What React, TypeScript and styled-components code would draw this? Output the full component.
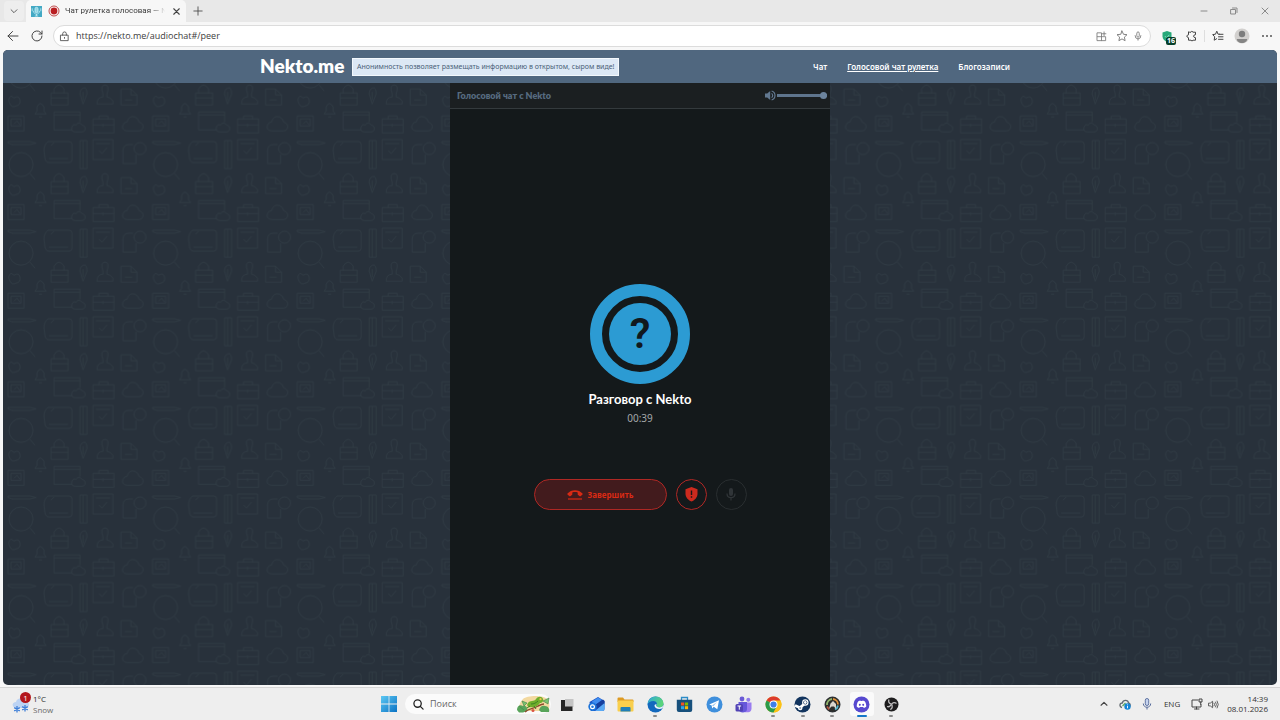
import React from "react";
import styled, { createGlobalStyle, css } from "styled-components";

const UI_FONT = `"Open Sans", "Noto Sans", sans-serif`;
const SITE_FONT = `"Noto Sans", "Open Sans", sans-serif`;
const HEADING_FONT = `Lato, "Noto Sans", sans-serif`;

const GlobalStyle = createGlobalStyle`
  *, *::before, *::after { box-sizing: border-box; }
  body { margin: 0; background: #f7f7f7; font-family: ${UI_FONT}; }
  button, input { font: inherit; color: inherit; }
  button { padding: 0; border: 0; background: none; cursor: pointer; }
  h1, p { margin: 0; }
  svg { display: block; flex: none; }
`;

const Desktop = styled.div`
  display: flex;
  flex-direction: column;
  min-height: 100vh;
`;

/* ---------- Browser chrome ---------- */

const TabStrip = styled.div`
  display: flex;
  align-items: center;
  height: 22px;
  padding-left: 4px;
  background: #e8e8e8;
`;

const IconButton = styled.button<{ $w?: number; $soft?: boolean }>`
  display: flex;
  flex: none;
  align-items: center;
  justify-content: center;
  width: ${(p) => p.$w ?? 22}px;
  height: 22px;
  color: ${(p) => (p.$soft ? "#767676" : "#444")};
`;

const TabMenuButton = styled(IconButton)`
  height: 20px;
  margin-right: 2px;
  border-radius: 4px;
  background: #eeeeee;
`;

const Tab = styled.div`
  display: flex;
  align-items: center;
  gap: 5px;
  height: 22px;
  width: 160px;
  padding: 0 4px;
  border-radius: 5px 5px 0 0;
  background: #f7f7f7;
`;

const TabTitle = styled.span`
  flex: 1;
  min-width: 0;
  white-space: nowrap;
  font-family: Roboto, sans-serif;
  font-size: 8px;
  line-height: 12px;
  color: #3a3a3a;
  mask-image: linear-gradient(to right, #000 88%, transparent);
`;

const WindowControls = styled.div`
  display: flex;
  margin-left: auto;

  ${IconButton} {
    color: #8a8a8a;
  }
`;

const Toolbar = styled.div`
  display: flex;
  align-items: center;
  height: 28px;
  padding-left: 2px;
  background: #f7f7f7;
`;

const AddressBar = styled.label`
  display: flex;
  flex: 1;
  align-items: center;
  height: 22px;
  margin: 0 4px;
  padding: 0 4px 0 5px;
  border: 1px solid #dcdcdc;
  border-radius: 11px;
  background: #fff;
  color: #555;
`;

const AddressInput = styled.input`
  flex: 1;
  min-width: 0;
  margin-left: 6px;
  padding: 0;
  border: 0;
  outline: 0;
  background: transparent;
  font-size: 9px;
  line-height: 14px;
  color: #3c3c3c;
`;

const ToolbarDivider = styled.span`
  width: 1px;
  height: 12px;
  background: #dedede;
`;

const BadgeHost = styled(IconButton)`
  position: relative;
`;

const Badge = styled.span`
  position: absolute;
  left: 11px;
  top: 12px;
  padding: 0 1px;
  border-radius: 2px;
  background: #063f2b;
  color: #fff;
  font-size: 7px;
  font-weight: 700;
  line-height: 8px;
`;

/* ---------- Site ---------- */

const Page = styled.div`
  display: flex;
  flex: 1;
  flex-direction: column;
  margin: 0 3px 2px;
  overflow: hidden;
  border-radius: 5px;
  background: #28313b;
  font-family: ${SITE_FONT};
`;

const SiteHeader = styled.header`
  background: #50677f;
`;

const HeaderInner = styled.div`
  display: flex;
  align-items: center;
  max-width: 760px;
  height: 33px;
  margin: 0 auto;
`;

const Logo = styled.a`
  width: 92px;
  padding-bottom: 2px;
  color: #fff;
  font-family: ${HEADING_FONT};
  font-size: 19px;
  font-weight: 800;
  line-height: 24px;
  text-decoration: none;
`;

const Notice = styled.p`
  padding: 0 4px;
  border: 1px solid #f3f8fc;
  background: #dce8f5;
  color: #4a6178;
  font-size: 7px;
  line-height: 16px;
  white-space: nowrap;
`;

const Nav = styled.nav`
  display: flex;
  margin-left: auto;
`;

const NavLink = styled.a<{ $active?: boolean }>`
  padding: 0 10px;
  color: #fff;
  font-size: 8px;
  font-weight: 600;
  line-height: 16px;
  text-decoration: ${(p) => (p.$active ? "underline" : "none")};
`;

const SiteBody = styled.div`
  position: relative;
  display: flex;
  flex: 1;
  justify-content: center;
`;

const Backdrop = styled.svg`
  position: absolute;
  inset: 0;
  width: 100%;
  height: 100%;
`;

const CallPanel = styled.main`
  position: relative;
  display: flex;
  flex-direction: column;
  width: 380px;
  max-width: 100%;
  background: #14191b;
`;

const PanelHeader = styled.div`
  display: flex;
  align-items: center;
  justify-content: space-between;
  height: 26px;
  padding: 0 3px 0 7px;
  border-bottom: 1px solid #343a3d;
  background: #1b1f21;
  color: #566a7f;
  font-family: ${HEADING_FONT};
  font-size: 9px;
  font-weight: 800;
`;

const Volume = styled.label`
  display: flex;
  align-items: center;
  gap: 1px;
  color: #627890;
`;

const VolumeSlider = styled.input`
  width: 50px;
  height: 8px;
  margin: 0;
  appearance: none;
  background: linear-gradient(#5f758d, #5f758d) center / 100% 3px no-repeat;

  &::-webkit-slider-thumb {
    appearance: none;
    width: 7px;
    height: 7px;
    border-radius: 50%;
    background: #6d849d;
  }
`;

const CallBody = styled.section`
  display: flex;
  flex: 1;
  flex-direction: column;
  align-items: center;
  justify-content: center;
`;

const AvatarRing = styled.div`
  display: flex;
  align-items: center;
  justify-content: center;
  width: 100px;
  height: 100px;
  border: 12px solid #2c9bd3;
  border-radius: 50%;
`;

const AvatarCore = styled.div`
  display: flex;
  align-items: center;
  justify-content: center;
  width: 62px;
  height: 62px;
  border-radius: 50%;
  background: #2c9bd3;
  color: #11191e;
  font-family: Roboto, sans-serif;
  font-size: 42px;
  font-weight: 600;
  line-height: 62px;
`;

const CallTitle = styled.h1`
  margin-top: 6px;
  color: #fff;
  font-family: ${HEADING_FONT};
  font-size: 13px;
  font-weight: 700;
  line-height: 18px;
`;

const CallTimer = styled.p`
  margin-top: 2px;
  color: #a3a7a9;
  font-size: 10px;
  line-height: 16px;
`;

const Controls = styled.div`
  display: flex;
  gap: 9px;
  margin-top: 53px;
`;

const outlined = css`
  display: flex;
  align-items: center;
  justify-content: center;
  height: 31px;
  border-radius: 16px;
`;

const EndButton = styled.button`
  ${outlined}
  gap: 5px;
  width: 133px;
  border: 1px solid #ae2824;
  background: #421b1d;
  color: #d82a14;
  font-size: 8px;
  font-weight: 700;
`;

const RoundButton = styled.button<{ $muted?: boolean }>`
  ${outlined}
  width: 31px;
  border: 1px solid ${(p) => (p.$muted ? "#292e30" : "#b02825")};
  color: ${(p) => (p.$muted ? "#303538" : "#cc2a1e")};
`;

/* ---------- Taskbar ---------- */

const Taskbar = styled.footer`
  display: grid;
  grid-template-columns: 1fr auto 1fr;
  align-items: center;
  height: 33px;
  border-top: 1px solid #d6d6d6;
  background: #eeeeee;
`;

const Weather = styled.button`
  position: relative;
  display: flex;
  align-items: center;
  gap: 3px;
  justify-self: start;
  padding-left: 12px;
  font-size: 8px;
  line-height: 11px;
  text-align: left;
  color: #2b2b2b;
`;

const WeatherBadge = styled.span`
  position: absolute;
  left: 20px;
  top: -1px;
  width: 11px;
  height: 11px;
  border-radius: 50%;
  background: #b3161c;
  color: #fff;
  font-size: 8px;
  line-height: 11px;
  text-align: center;
`;

const Line = styled.span<{ $soft?: boolean }>`
  display: block;
  color: ${(p) => (p.$soft ? "#6a6a6a" : "inherit")};
`;

const Launcher = styled.div`
  display: flex;
  align-items: center;
  gap: 1px;
`;

const SearchBox = styled.label`
  display: flex;
  align-items: center;
  width: 146px;
  height: 20px;
  padding: 0 1px 0 8px;
  border-radius: 10px;
  background: #fbfbfb;
  color: #222;
`;

const SearchInput = styled.input`
  flex: 1;
  min-width: 0;
  margin-left: 6px;
  padding: 0;
  border: 0;
  outline: 0;
  background: transparent;
  font-size: 9px;
  line-height: 14px;

  &::placeholder {
    color: #666;
  }
`;

const Apps = styled.div`
  display: grid;
  grid-template-columns: repeat(12, 1fr);
  width: 354px;
`;

const AppButton = styled.button<{ $state?: "running" | "active" }>`
  position: relative;
  display: flex;
  align-items: center;
  justify-content: center;
  height: 24px;
  margin: 0 3px;
  border-radius: 3px;
  background: ${(p) => (p.$state === "active" ? "#fafafa" : "transparent")};

  &::after {
    content: "";
    position: absolute;
    bottom: -1px;
    display: ${(p) => (p.$state ? "block" : "none")};
    width: ${(p) => (p.$state === "active" ? 10 : 4)}px;
    height: 2px;
    border-radius: 1px;
    background: ${(p) => (p.$state === "active" ? "#1677c8" : "#8a8a8a")};
  }
`;

const Tray = styled.div`
  display: flex;
  align-items: center;
  justify-self: end;
  padding-right: 12px;
  color: #333;
`;

const Language = styled.button`
  margin: 0 9px 0 6px;
  font-size: 8px;
  line-height: 12px;
`;

const Clock = styled.time`
  margin-left: 6px;
  font-size: 8px;
  line-height: 10px;
  text-align: right;
`;

/* ---------- Icons ---------- */

type StrokeProps = { d: string; size?: number; box?: number; sw?: number };

const Stroke = ({ d, size = 12, box = 12, sw = 1 }: StrokeProps) => (
  <svg width={size} height={size} viewBox={`0 0 ${box} ${box}`} fill="none" stroke="currentColor" strokeWidth={sw} strokeLinecap="round" strokeLinejoin="round" aria-hidden="true">
    <path d={d} />
  </svg>
);

const Favicon = () => (
  <svg width="11" height="11" viewBox="0 0 11 11" aria-hidden="true">
    <rect width="11" height="11" fill="#43a9c4" />
    <g fill="none" stroke="#c7eef5" strokeWidth=".8">
      <rect x="4" y="1.3" width="3" height="5.4" rx="1.5" fill="#8fd5e4" />
      <path d="M2.5 4.8c0 4.4 6 4.4 6 0M5.5 8v2M3.8 10h3.4M1.2 2.3v3M9.8 2.3v3" />
    </g>
  </svg>
);

const RecordDot = () => (
  <svg width="12" height="12" viewBox="0 0 12 12" aria-hidden="true">
    <circle cx="6" cy="6" r="5" fill="#fff" stroke="#bd4a4a" />
    <circle cx="6" cy="6" r="3.4" fill="#b91f22" />
  </svg>
);

const AvatarIcon = () => (
  <svg width="16" height="16" viewBox="0 0 16 16" aria-hidden="true">
    <circle cx="8" cy="8" r="7.5" fill="#d2d0ce" />
    <circle cx="8" cy="6" r="3.2" fill="#7d7d7d" />
    <path d="M2.8 11h10.400c0 2-2.200 4-5.200 4s-5.200-2-5.200-4z" fill="#858585" />
  </svg>
);

const ShieldCheck = () => (
  <svg width="10" height="11" viewBox="0 0 10 11" aria-hidden="true">
    <path d="M5 0l4.500 1.600v4c0 2.600-2 4.400-4.500 5.400C2.500 10 .5 8.200.5 5.600v-4z" fill="#27a97a" />
    <path d="M3 5.200l1.600 1.600 2.800-3" fill="none" stroke="#8fe0c0" />
  </svg>
);

const Speaker = () => (
  <svg width="11" height="11" viewBox="0 0 11 11" aria-hidden="true">
    <path d="M0 3.600h2.200L5.200 1v9L2.200 7.400H0z" fill="currentColor" />
    <path d="M6.600 3.400c1.400 1.100 1.400 3.100 0 4.200M6.600 1c4.500 1.400 4.500 7.600 0 9" fill="none" stroke="currentColor" strokeWidth="1.200" />
  </svg>
);

const HangUp = () => (
  <svg width="16" height="12" viewBox="0 0 16 12" aria-hidden="true">
    <path d="M8 1.200c-3 0-5.600 1.200-7.500 3.400-.3.300-.3.600 0 .9l1.900 1.700c.3.200.6.200.9 0l1.600-1.200c.3-.2.400-.4.400-.7V3.500c1.800-.6 3.600-.6 5.400 0v1.800c0 .3.100.5.400.7l1.600 1.200c.3.200.6.200.9 0l1.900-1.700c.3-.3.300-.6 0-.9C13.600 2.400 11 1.200 8 1.200z" fill="currentColor" />
    <path d="M1 10h14" stroke="currentColor" strokeWidth="1.200" />
  </svg>
);

const ReportShield = () => (
  <svg width="13" height="15" viewBox="0 0 13 15" aria-hidden="true">
    <path d="M6.500 0L12.500 2.300v4.400c0 3.500-2.500 6.300-6 7.800C3 13 .5 10.200.5 6.700V2.300z" fill="currentColor" />
    <path d="M6.500 3.600v4.300M6.500 9.300v1.500" stroke="#1b1718" strokeWidth="1.400" />
  </svg>
);

const MicSolid = () => (
  <svg width="10" height="13" viewBox="0 0 10 13" aria-hidden="true">
    <rect x="3" y="0" width="4" height="8" rx="2" fill="currentColor" />
    <path d="M1 5.500c0 5.500 8 5.500 8 0M5 9.600V12.500" fill="none" stroke="currentColor" strokeWidth="1.200" />
  </svg>
);

const WindowsLogo = () => (
  <svg width="16" height="16" viewBox="0 0 16 16" aria-hidden="true">
    <defs>
      <linearGradient id="win" x1="0" y1="0" x2="1" y2="1">
        <stop offset="0" stopColor="#5cc8f3" />
        <stop offset="1" stopColor="#0a72c4" />
      </linearGradient>
    </defs>
    <path d="M0 0h7.600v7.600H0zM8.400 0H16v7.600H8.400zM0 8.400h7.600V16H0zM8.400 8.400H16V16H8.400z" fill="url(#win)" />
  </svg>
);

const Chameleon = () => (
  <svg width="33" height="18" viewBox="0 0 33 18" aria-hidden="true">
    <path d="M6 4C10 0 27 0 30 4c3 3 3 9 1 12H3C1 12 3 7 6 4z" fill="#f3d9a0" />
    <path d="M0 15c0-4 3-6 6-4 3-1 5 2 4 5l-4 1.500H2zM22 15c1-4 4-5 6-4 3 0 5 3 4 6H24z" fill="#58a45a" />
    <path d="M5 6l5 2-3 3zM26 6l6-3-1 6zM2 11l5 4" fill="#7cc36f" stroke="#3f8248" strokeWidth=".6" />
    <path d="M8 17c4-4 9-3 13-6 2-1 4-2 6-2" fill="none" stroke="#8d4b2d" strokeWidth="1.400" />
    <path d="M11 8c2-3 6-1 8-4 2-3 6-3 7 0 1 2-1 4-3 4-2 3-6 5-9 4-3 1-5-2-3-4z" fill="#6fae2c" />
    <path d="M14 9c3 0 5-1 7-3M17 11l2 3M13 11l-3 2" fill="none" stroke="#3f7f23" strokeWidth="1" />
    <circle cx="23.500" cy="4.200" r="1.100" fill="#f2c14e" />
    <circle cx="16" cy="15.500" r="1.500" fill="#d95445" />
  </svg>
);

const TaskView = () => (
  <svg width="16" height="16" viewBox="0 0 16 16" aria-hidden="true">
    <path d="M6 3h8.500v8H6z" fill="#c4c4c4" />
    <path d="M2 4h4v6.500h7.500V15H2z" fill="#262626" />
  </svg>
);

const OutlookIcon = () => (
  <svg width="17" height="16" viewBox="0 0 17 16" aria-hidden="true">
    <path d="M1.500 6L10 1l6.500 4v8q0 2-2 2H3z" fill="#1a52c4" />
    <path d="M4 5.500l6-4 4 2.500-8 6z" fill="#3f8df0" />
    <path d="M7 9l8-5.500 1.500 1.500v3L9 13z" fill="#163f9e" />
    <path d="M16.500 7v6q0 2-2 2H7z" fill="#5aaaf5" />
    <circle cx="4.500" cy="10.800" r="4.200" fill="#1c74da" />
    <circle cx="4.500" cy="10.800" r="1.900" fill="none" stroke="#fff" strokeWidth="1.200" />
  </svg>
);

const FolderIcon = () => (
  <svg width="17" height="15" viewBox="0 0 17 15" aria-hidden="true">
    <path d="M.5 1.500Q.5.500 1.500.500H6l1.500 2h8q1 0 1 1V5H.5z" fill="#dd9a22" />
    <rect x=".5" y="3.500" width="16" height="11" rx="1" fill="#f9cf4d" />
    <path d="M3.500 14.500V11q0-1 1-1h8q1 0 1 1v3.500z" fill="#1f7fb8" />
  </svg>
);

const EdgeIcon = () => (
  <svg width="17" height="17" viewBox="0 0 17 17" aria-hidden="true">
    <defs>
      <linearGradient id="edge" x1="0" y1="0" x2="1" y2=".3">
        <stop offset="0" stopColor="#2aa8dc" />
        <stop offset="1" stopColor="#5bd47a" />
      </linearGradient>
    </defs>
    <circle cx="8.500" cy="8.500" r="8" fill="#1268bd" />
    <path d="M.5 8.500C1 3.500 4.500.500 8.500.500c4.800 0 8 3.300 8 7.300 0 2.400-1.900 3.700-4 3.700-1.900 0-3.200-.7-3.200-1.600 0-.7.600-.9.600-2C9.900 6.300 8.300 5 6.300 5 3.500 5 1.200 6.300.5 8.500z" fill="url(#edge)" />
    <path d="M9.600 8.300c-.5.600-.6 1.200-.3 1.800.7 1.400 3.400 1.800 5.200.9.900-.4 1.500-1.100 1.800-1.800.1 1-.3 2.200-.8 3-2.500 1.600-7.400.8-8-2.100-.2-1.400.9-2.300 2.100-1.800z" fill="#eef6fb" />
  </svg>
);

const StoreIcon = () => (
  <svg width="17" height="17" viewBox="0 0 17 17" aria-hidden="true">
    <path d="M5.500 4V1.500h6V4" fill="none" stroke="#2c8cc8" strokeWidth="1.300" />
    <path d="M.8 3.800h15.400V14q0 2-2 2H2.800q-2 0-2-2z" fill="#17507c" />
    <path d="M5 6.500h3.200v3H5z" fill="#f25022" />
    <path d="M8.900 6.500h3.200v3H8.900z" fill="#7fba00" />
    <path d="M5 10.200h3.200v3H5z" fill="#29a8ea" />
    <path d="M8.900 10.200h3.200v3H8.900z" fill="#ffb900" />
  </svg>
);

const TelegramIcon = () => (
  <svg width="17" height="17" viewBox="0 0 17 17" aria-hidden="true">
    <circle cx="8.500" cy="8.500" r="8" fill="#3f8fdc" />
    <path d="M3.200 8.400l9.800-4.100-1.700 9-3.500-2.600-1.700 1.700-.4-2.900z" fill="#fff" />
    <path d="M5.900 9.400l5-3.400-3.400 4.200z" fill="#9cc8ee" />
  </svg>
);

const TeamsIcon = () => (
  <svg width="17" height="17" viewBox="0 0 17 17" aria-hidden="true">
    <circle cx="7" cy="3" r="2.400" fill="#6b5ad6" />
    <circle cx="13.300" cy="3.800" r="2" fill="#8f7bea" />
    <path d="M10 6.500h6.500v6c0 2.300-1.500 3.700-3.300 3.700H10z" fill="#9a7cf0" />
    <path d="M3.500 6h8.500v7c0 2-1.800 3.500-4.200 3.500S3.500 15 3.500 13z" fill="#6657da" />
    <rect x=".5" y="8" width="7.500" height="7.500" rx="1.500" fill="#5142b5" />
    <path d="M2.500 10h3.600M4.300 10v3.700" stroke="#fff" strokeWidth="1" />
  </svg>
);

const ChromeIcon = () => (
  <svg width="17" height="17" viewBox="0 0 17 17" aria-hidden="true">
    <circle cx="8.500" cy="8.500" r="8" fill="#fbc116" />
    <path d="M8.500 8.500L1.570 4.500A8 8 0 0 1 15.430 4.500z" fill="#dc3a2c" />
    <path d="M8.500 8.500L1.570 4.500A8 8 0 0 0 8.500 16.500L12 10.500z" fill="#2b9b4b" />
    <path d="M8.500 4.500h6.930A8 8 0 0 1 8.500 16.500L12 10.500z" fill="#fbc116" />
    <circle cx="8.500" cy="8.500" r="4" fill="#fff" />
    <circle cx="8.500" cy="8.500" r="3.100" fill="#3f7fe8" />
  </svg>
);

const SteamIcon = () => (
  <svg width="17" height="17" viewBox="0 0 17 17" aria-hidden="true">
    <circle cx="8.500" cy="8.500" r="8" fill="#12345e" />
    <path d="M1 9.500L6 11.700l4.500-4" fill="none" stroke="#fff" strokeWidth="2.800" />
    <circle cx="11.300" cy="6.500" r="3.200" fill="#fff" />
    <circle cx="11.300" cy="6.500" r="2" fill="#12345e" />
    <circle cx="11.300" cy="6.500" r="1.400" fill="#fff" />
    <circle cx="6.200" cy="12" r="2.300" fill="#fff" />
    <circle cx="6.200" cy="12" r="1" fill="#8d9fb6" />
  </svg>
);

const GameIcon = () => (
  <svg width="17" height="17" viewBox="0 0 17 17" aria-hidden="true">
    <circle cx="8.500" cy="8.500" r="7.500" fill="#2c2d2b" stroke="#23262a" />
    <path d="M3 9a5.500 5.500 0 0 1 5-6" fill="none" stroke="#8fb36b" strokeWidth="1.800" />
    <path d="M9 3a5.500 5.500 0 0 1 5 5.500" fill="none" stroke="#e0913a" strokeWidth="1.800" />
    <path d="M14 9.500a5.500 5.500 0 0 1-3 4" fill="none" stroke="#54b6cf" strokeWidth="1.800" />
    <path d="M5 13l1.500-5.500L9 5l3 3v5l-2-2.500H7.500z" fill="#d9d5cd" />
    <path d="M3 10.500l2.200 3" stroke="#b7553f" strokeWidth="1.600" />
  </svg>
);

const DiscordIcon = () => (
  <svg width="17" height="17" viewBox="0 0 17 17" aria-hidden="true">
    <circle cx="8.500" cy="8.500" r="8" fill="#5749cf" />
    <path d="M5.300 5.200c1-.5 1.700-.6 2-.7l.3.600h1.800l.3-.6c.3.100 1 .2 2 .7 1.200 1.700 1.700 3.500 1.500 5.500-.8.600-1.600 1-2.400 1.200l-.6-1H6.800l-.6 1c-.8-.2-1.600-.6-2.400-1.200-.2-2 .3-3.800 1.500-5.500z" fill="#fff" />
    <ellipse cx="6.800" cy="8.800" rx="1" ry="1.100" fill="#5749cf" />
    <ellipse cx="10.200" cy="8.800" rx="1" ry="1.100" fill="#5749cf" />
  </svg>
);

const ObsIcon = () => (
  <svg width="15" height="15" viewBox="0 0 15 15" aria-hidden="true">
    <circle cx="7.500" cy="7.500" r="7" fill="#1d1c1d" />
    <g fill="none" stroke="#bdbcbd" strokeWidth="1.300">
      <path d="M5 2.500c-1 2 0 4 2.500 4.700" />
      <path d="M12.500 6.500C10.700 5 8.500 5.700 7.500 7.300" />
      <path d="M6.200 12.500c2-.7 2.700-3 1.300-5.200M3 9.500c1.500.6 3.300 0 4.500-2.200" />
    </g>
  </svg>
);

const SnowCloud = () => (
  <svg width="18" height="20" viewBox="0 0 18 20" aria-hidden="true">
    <path d="M4 14c-5-1-4-6 0-6 1-5 9-5 10 0 4 0 4 5 0 6z" fill="#bcd3f3" />
    <g stroke="#3e7fd8" strokeWidth="1.300">
      <path d="M5 12v6.500M2.200 13.600l5.600 3.300M7.800 13.600l-5.600 3.300" />
      <path d="M13 11v6.500M10.200 12.600l5.600 3.300M15.800 12.600l-5.600 3.300" />
    </g>
  </svg>
);

const CloudSync = () => (
  <svg width="12" height="11" viewBox="0 0 12 11" aria-hidden="true">
    <path d="M3 8.500c-3-.5-2.500-4.500.3-4.500C4.200.500 9 .700 9.500 4c2 .2 2.300 3 .5 4.300" fill="none" stroke="#626a70" strokeWidth="1.300" />
    <path d="M3.500 7l3-3" stroke="#5da85e" strokeWidth="1.200" />
    <circle cx="8.500" cy="7.500" r="3.200" fill="#1384d6" />
    <path d="M8.500 7v2.300M8.500 5.500v.8" stroke="#fff" strokeWidth=".9" />
  </svg>
);

const TrayMic = () => (
  <svg width="10" height="12" viewBox="0 0 10 12" aria-hidden="true">
    <rect x="3.300" y=".5" width="3.400" height="7" rx="1.700" fill="#c6d3ee" stroke="#566b9c" strokeWidth=".9" />
    <path d="M1.300 5.500c0 5 7.400 5 7.400 0M5 9.300v2.200" fill="none" stroke="#566b9c" />
  </svg>
);

/* ---------- Backdrop pattern ---------- */

const DoodleBackdrop = () => (
  <Backdrop aria-hidden="true">
    <defs>
      <pattern id="doodles" y="-33" width="144.600" height="88.600" patternUnits="userSpaceOnUse">
        <g fill="none" stroke="#303b44" strokeWidth=".9" strokeLinejoin="round">
          <path d="M5 3h22l6 1.500-6 1.500H9L5 4.500z" />
          <circle cx="18" cy="26" r="12" />
          <path d="M27 35l5 6" />
          <path d="M45 3h21q3 0 3 3v15q0 3-3 3H46q-3 0-4-4l-1-8q0-6 4-9zM48 7l3-3M46 20h19" />
          <path d="M77 2h7v28h-7zM80 2v28" />
          <path d="M90 1h20v20H90zM93 5h14M96 12l3 3 5-6" />
          <path d="M133 16v9h-13V12q0-6 6-6h4" />
          <circle cx="137" cy="10" r="6" />
          <path d="M7 54q-3-5 1-8l3 2q5-3 6 2t-4 6q-4 2-6-2z" />
          <path d="M48 43h17v12H48zM51 43v-4q5-8 10 0v4M48 48h17" />
          <path d="M80 54l-3-10q0-5 3.500-6t3.500 6zM80 42v8" />
          <path d="M94 54h16v-3q-3-4-6-4v-3q3-9-2-9t-2 9v3q-6 0-6 7z" />
          <path d="M118 39h10l6 6v10h-16zM128 39v6h6M122 50h7" />
          <path d="M32 64h11l-2-3v-4q-4-7-7 0v4zM36 67h3" />
          <path d="M5 66h16v15H5zM8 69h10v7H8zM11 74l3-3 3 4" />
          <path d="M69 80H51V62h26v10M51 65h26" />
          <path d="M72 82q-5-1-3-5 1-3 4-2 3-4 6 0 4 1 3 5-1 2-3 2z" />
          <path d="M90 69h21v14H90zM96 69v-3h9v3M90 75h21M100 74v3" />
          <path d="M124 81q-6-1-4-6 1-3 4-3 2-7 8-5 4 2 4 5 5 2 4 6-1 3-4 3z" />
        </g>
      </pattern>
    </defs>
    <rect width="100%" height="100%" fill="url(#doodles)" />
  </Backdrop>
);

const apps: { name: string; icon: React.ReactNode; state?: "running" | "active" }[] = [
  { name: "Task View", icon: <TaskView /> },
  { name: "Outlook", icon: <OutlookIcon /> },
  { name: "Explorer", icon: <FolderIcon /> },
  { name: "Edge", icon: <EdgeIcon />, state: "running" },
  { name: "Store", icon: <StoreIcon /> },
  { name: "Telegram", icon: <TelegramIcon /> },
  { name: "Teams", icon: <TeamsIcon /> },
  { name: "Chrome", icon: <ChromeIcon />, state: "running" },
  { name: "Steam", icon: <SteamIcon />, state: "running" },
  { name: "Game", icon: <GameIcon />, state: "running" },
  { name: "Discord", icon: <DiscordIcon />, state: "active" },
  { name: "OBS", icon: <ObsIcon />, state: "running" },
];

export default function App() {
  return (
    <Desktop>
      <GlobalStyle />

      <TabStrip>
        <TabMenuButton aria-label="Tab actions" $w={20}>
          <Stroke d="M2.500 4.500L6 8l3.500-3.500" size={10} />
        </TabMenuButton>
        <Tab>
          <IconButton as="span" $w={13}>
            <Favicon />
          </IconButton>
          <RecordDot />
          <TabTitle>Чат рулетка голосовая — N</TabTitle>
          <IconButton aria-label="Close tab" $w={12}>
            <Stroke d="M3 3l6 6M9 3l-6 6" size={11} sw={1.2} />
          </IconButton>
        </Tab>
        <IconButton aria-label="New tab" $w={24}>
          <Stroke d="M6 1v10M1 6h10" size={10} />
        </IconButton>
        <WindowControls>
          <IconButton aria-label="Minimize" $w={31}>
            <Stroke d="M3 6h6" />
          </IconButton>
          <IconButton aria-label="Restore" $w={30}>
            <Stroke d="M3 4.500h4.500V9H3zM4.500 3h4.500v4.500" />
          </IconButton>
          <IconButton aria-label="Close" $w={31}>
            <Stroke d="M3 3l6 6M9 3l-6 6" />
          </IconButton>
        </WindowControls>
      </TabStrip>

      <Toolbar>
        <IconButton aria-label="Back">
          <Stroke d="M11 6H1M5.500 1.500L1 6l4.500 4.500" />
        </IconButton>
        <IconButton aria-label="Reload" $w={25}>
          <Stroke d="M11 6a5 5 0 1 1-1.500-3.600L11 4M11 1v3H8" />
        </IconButton>
        <AddressBar>
          <Stroke d="M2 4.500h8v6H2zM4 4.500V3q0-2 2-2t2 2v1.500M6 7v1" size={11} />
          <AddressInput aria-label="Address" defaultValue="https://nekto.me/audiochat#/peer" />
          <IconButton aria-label="Apps" $w={26} $soft>
            <Stroke d="M1.500 2H6v8.500H1.500zM1.500 6.200h9v4.300H6M8.800 1v4M6.800 3h4" size={11} sw={0.9} />
          </IconButton>
          <IconButton aria-label="Add to favorites" $w={16} $soft>
            <Stroke d="M6 1l1.500 3.300 3.500.4-2.600 2.400.7 3.600L6 8.900l-3.100 1.800.7-3.600L1 4.700l3.500-.4z" sw={0.9} />
          </IconButton>
          <IconButton aria-label="Microphone" $w={16} $soft>
            <Stroke d="M4.500 3q0-2 1.500-2t1.500 2v2.500q0 2-1.500 2t-1.500-2zM2.500 5.500q0 4 3.500 4t3.500-4M6 9.500V11" size={10} />
          </IconButton>
        </AddressBar>
        <BadgeHost aria-label="Extension" $w={24}>
          <ShieldCheck />
          <Badge>16</Badge>
        </BadgeHost>
        <IconButton aria-label="Extensions" $w={25}>
          <Stroke d="M4 2.200h1q.8-2 2 0h2.500v2.500q-2 .2-2 1.500t2 1.500v2.500H7q-1 1.800-2 0H2.500V7.700Q.500 7 .8 6t1.700-1.200V2.200z" />
        </IconButton>
        <ToolbarDivider />
        <IconButton aria-label="Favorites" $w={25}>
          <Stroke d="M7.500 4.200H6L4.800 1.200 3.500 4.200.700 4.600l2 2.200-.5 3.400 2.500-1.500M7.500 4.300H11M6.500 6.800H11M6.500 9.300H11" />
        </IconButton>
        <IconButton aria-label="Profile" $w={24}>
          <AvatarIcon />
        </IconButton>
        <IconButton aria-label="More" $w={26}>
          <Stroke d="M2 6h.01M6 6h.01M10 6h.01" sw={1.8} />
        </IconButton>
      </Toolbar>

      <Page>
        <SiteHeader>
          <HeaderInner>
            <Logo href="#/">Nekto.me</Logo>
            <Notice>Анонимность позволяет размещать информацию в открытом, сыром виде!</Notice>
            <Nav>
              <NavLink href="#/chat">Чат</NavLink>
              <NavLink href="#/peer" $active>
                Голосовой чат рулетка
              </NavLink>
              <NavLink href="#/blog">Блогозаписи</NavLink>
            </Nav>
          </HeaderInner>
        </SiteHeader>
        <SiteBody>
          <DoodleBackdrop />
          <CallPanel>
            <PanelHeader>
              <span>Голосовой чат с Nekto</span>
              <Volume>
                <Speaker />
                <VolumeSlider type="range" aria-label="Громкость" min={0} max={100} defaultValue={100} />
              </Volume>
            </PanelHeader>
            <CallBody>
              <AvatarRing>
                <AvatarCore>?</AvatarCore>
              </AvatarRing>
              <CallTitle>Разговор с Nekto</CallTitle>
              <CallTimer>00:39</CallTimer>
              <Controls>
                <EndButton>
                  <HangUp />
                  Завершить
                </EndButton>
                <RoundButton aria-label="Пожаловаться">
                  <ReportShield />
                </RoundButton>
                <RoundButton aria-label="Микрофон" $muted>
                  <MicSolid />
                </RoundButton>
              </Controls>
            </CallBody>
          </CallPanel>
        </SiteBody>
      </Page>

      <Taskbar>
        <Weather>
          <SnowCloud />
          <WeatherBadge>1</WeatherBadge>
          <span>
            <Line>1°C</Line>
            <Line $soft>Snow</Line>
          </span>
        </Weather>
        <Launcher>
          <IconButton aria-label="Start" $w={30}>
            <WindowsLogo />
          </IconButton>
          <SearchBox>
            <Stroke d="M9 5a4 4 0 1 1-8 0 4 4 0 0 1 8 0M8 8l3 3" size={11} sw={1.4} />
            <SearchInput aria-label="Поиск" placeholder="Поиск" />
            <Chameleon />
          </SearchBox>
          <Apps>
            {apps.map((app) => (
              <AppButton key={app.name} aria-label={app.name} $state={app.state}>
                {app.icon}
              </AppButton>
            ))}
          </Apps>
        </Launcher>
        <Tray>
          <IconButton aria-label="Hidden icons" $w={20}>
            <Stroke d="M2.500 7.500L6 4l3.500 3.500" size={10} sw={1.4} />
          </IconButton>
          <IconButton aria-label="Cloud sync">
            <CloudSync />
          </IconButton>
          <IconButton aria-label="Microphone in use">
            <TrayMic />
          </IconButton>
          <Language>ENG</Language>
          <IconButton aria-label="Network" $w={16}>
            <Stroke d="M7 2H1v7h9V6.500M3.500 11h4.500M5.500 9v2M8.500 1h2.500v3H8.500zM9.700 4v2.500" />
          </IconButton>
          <IconButton aria-label="Volume" $w={16}>
            <Stroke d="M1 4.500h1.500L5 2.500v7L2.500 7.500H1zM6.700 4.500q1 1.500 0 3M8.300 3.300q1.900 2.700 0 5.400M10 2.200q2.600 3.800 0 7.600" size={11} sw={0.9} />
          </IconButton>
          <Clock>
            <Line>14:39</Line>
            <Line>08.01.2026</Line>
          </Clock>
        </Tray>
      </Taskbar>
    </Desktop>
  );
}
